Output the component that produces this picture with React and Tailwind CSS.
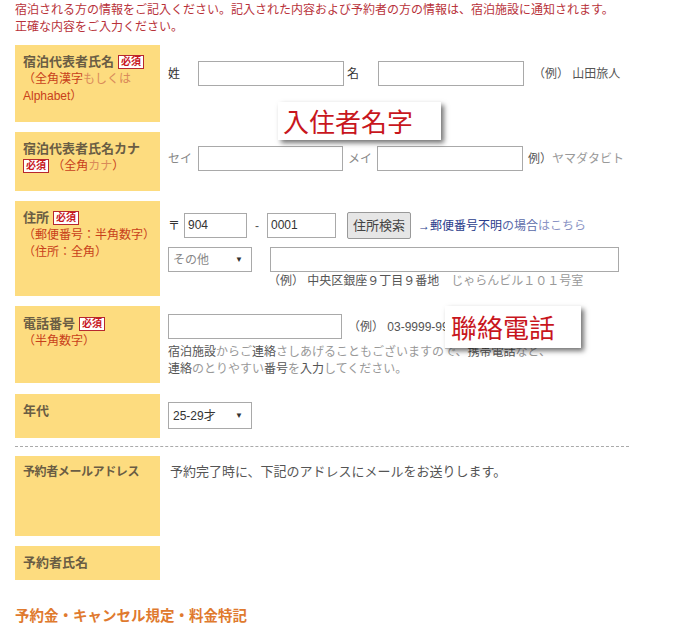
import React from "react";

const font = { fontFamily: '"Liberation Sans", "Noto Sans CJK JP", sans-serif' };

function Badge() {
  return (
    <span className="inline-block align-[1px] ml-[4px] px-[2px] border border-[#b7282e] bg-white text-[#c8161d] text-[10px] leading-[12px] font-bold">
      必須
    </span>
  );
}

function Label({ h, children }) {
  return (
    <div className={`w-[145px] shrink-0 bg-[#fddc7f] pl-[8px] pt-[8px] text-[12px] leading-[17px] ${h}`}>
      {children}
    </div>
  );
}

function Title({ children, narrow }) {
  return (
    <span className={`font-bold text-[#6a5d44] ${narrow ? "text-[12px] tracking-[-0.4px]" : "text-[13px]"}`}>
      {children}
    </span>
  );
}

function Input({ w, value }) {
  return (
    <div className={`h-[25px] border border-[#a9a9a9] bg-white px-[3px] text-[12px] leading-[23px] text-[#333] ${w}`}>
      {value}
    </div>
  );
}

function Select({ value, h = "h-[25px]", muted }) {
  return (
    <div className={`w-[84px] ${h} border border-[#a9a9a9] bg-white flex items-center justify-between pl-[4px] pr-[8px] text-[12px]`}>
      <span className={muted ? "text-[#888]" : "text-[#333]"}>{value}</span>
      <span className="text-[8px] text-[#333]">▼</span>
    </div>
  );
}

export default function App() {
  return (
    <div className="relative w-[682px] h-[627px] overflow-hidden bg-white" style={font}>
      <div className="pl-[15px] pt-[2px] text-[12px] leading-[17px] text-[#b8323a]">
        <div>宿泊される方の情報をご記入ください。記入された内容および予約者の方の情報は、宿泊施設に通知されます。</div>
        <div>正確な内容をご入力ください。</div>
      </div>

      <div className="pl-[15px] mt-[9px]">
        {/* 氏名 */}
        <div className="flex">
          <Label h="h-[77px]">
            <Title>宿泊代表者氏名</Title>
            <Badge />
            <div className="text-[#c8401a]">（全角漢字<span className="text-[#d98a5a]">もしくは</span></div>
            <div className="text-[#c8401a]">Alphabet）</div>
          </Label>
          <div className="pl-[8px] pt-[16px] flex items-center h-[41px] text-[12px] text-[#333]">
            <span className="w-[30px]">姓</span>
            <Input w="w-[146px]" />
            <span className="ml-[3px] w-[31px]">名</span>
            <Input w="w-[146px]" />
            <span className="ml-[9px] text-[#555]">（例） 山田旅人</span>
          </div>
        </div>

        {/* カナ */}
        <div className="flex mt-[10px]">
          <Label h="h-[59px]">
            <div><Title>宿泊代表者氏名カナ</Title></div>
            <div className="-ml-[4px] text-[#c8401a]">
              <Badge /> （全角<span className="text-[#d98a5a]">カナ</span>）
            </div>
          </Label>
          <div className="pl-[8px] pt-[14px] flex items-center h-[39px] text-[12px] text-[#888]">
            <span className="w-[30px]">セイ</span>
            <Input w="w-[145px]" />
            <span className="ml-[5px] w-[29px]">メイ</span>
            <Input w="w-[146px]" />
            <span className="ml-[5px] text-[#555]">例）<span className="text-[#999]">ヤマダタビト</span></span>
          </div>
        </div>

        {/* 住所 */}
        <div className="flex mt-[10px]">
          <Label h="h-[95px]">
            <div><Title>住所</Title><Badge /></div>
            <div className="text-[#c8401a]">（郵便番号：半角数字）</div>
            <div className="text-[#c8401a]">（住所：全角）</div>
          </Label>
          <div className="pl-[8px] pt-[11px] text-[12px] text-[#333]">
            <div className="flex items-center">
              <span className="w-[16px]">〒</span>
              <Input w="w-[63px]" value="904" />
              <span className="mx-[8px] text-[#555]">-</span>
              <Input w="w-[69px]" value="0001" />
              <div className="ml-[11px] w-[64px] h-[27px] border border-[#999] rounded-[2px] bg-[#e6e6e6] flex items-center justify-center text-[13px] text-[#444]">
                住所検索
              </div>
              <span className="ml-[7px] text-[#2b3d8c]">→郵便番号不明<span className="text-[#5a6aa8]">の場合</span><span className="text-[#8a93c4]">はこちら</span></span>
            </div>
            <div className="flex items-center mt-[8px]">
              <Select value="その他" muted />
              <div className="ml-[18px]"><Input w="w-[349px]" /></div>
            </div>
            <div className="ml-[100px] mt-[1px] leading-[17px] text-[#555]">
              （例） 中央区銀座９丁目９番地　<span className="text-[#999]">じゃらんビル１０１号室</span>
            </div>
          </div>
        </div>

        {/* 電話番号 */}
        <div className="flex mt-[10px]">
          <Label h="h-[77px]">
            <div className="pt-[1px]"><Title>電話番号</Title><Badge /></div>
            <div className="text-[#c8401a]">（半角数字）</div>
          </Label>
          <div className="pl-[8px] pt-[8px] text-[12px] text-[#555]">
            <div className="flex items-center">
              <Input w="w-[174px]" />
              <span className="ml-[6px]">（例） 03-9999-9999</span>
            </div>
            <div className="mt-[5px] leading-[17px]">
              <div>宿泊施設<span className="text-[#999]">からご</span>連絡<span className="text-[#999]">さしあげることもございますので、</span>携帯電話<span className="text-[#999]">など、</span></div>
              <div>連絡<span className="text-[#999]">のとりやすい</span>番号<span className="text-[#999]">を</span>入力<span className="text-[#999]">してください。</span></div>
            </div>
          </div>
        </div>

        {/* 年代 */}
        <div className="flex mt-[11px]">
          <Label h="h-[44px]">
            <Title>年代</Title>
          </Label>
          <div className="pl-[8px] pt-[8px]">
            <Select value="25-29才" h="h-[27px]" />
          </div>
        </div>

        <div className="w-[614px] mt-[8px] border-t border-dashed border-[#aaa]" />

        {/* メール */}
        <div className="flex mt-[9px]">
          <Label h="h-[80px]">
            <Title narrow>予約者メールアドレス</Title>
          </Label>
          <div className="pl-[10px] pt-[7px] text-[13px] leading-[17px] text-[#555]">
            予約完了時に、下記のアドレスにメールをお送りします。
          </div>
        </div>

        {/* 予約者氏名 */}
        <div className="flex mt-[10px]">
          <Label h="h-[34px]">
            <Title>予約者氏名</Title>
          </Label>
        </div>

        <div className="mt-[26px] text-[14.5px] leading-[20px] font-bold text-[#e07a2e]">
          予約金・キャンセル規定・料金特記
        </div>
      </div>

      {/* annotations */}
      <div
        className="absolute left-[278px] top-[102px] w-[163px] h-[38px] bg-white shadow-[3px_3px_5px_rgba(0,0,0,0.55)] pl-[5px] text-[26px] leading-[38px] text-[#c8161d]"
        style={{ fontFamily: '"Noto Sans CJK TC", sans-serif' }}
      >
        入住者名字
      </div>
      <div
        className="absolute left-[445px] top-[306px] w-[136px] h-[42px] bg-white shadow-[3px_3px_5px_rgba(0,0,0,0.55)] pl-[6px] text-[26px] leading-[42px] text-[#c8161d]"
        style={{ fontFamily: '"Noto Sans CJK TC", sans-serif' }}
      >
        聯絡電話
      </div>
    </div>
  );
}
